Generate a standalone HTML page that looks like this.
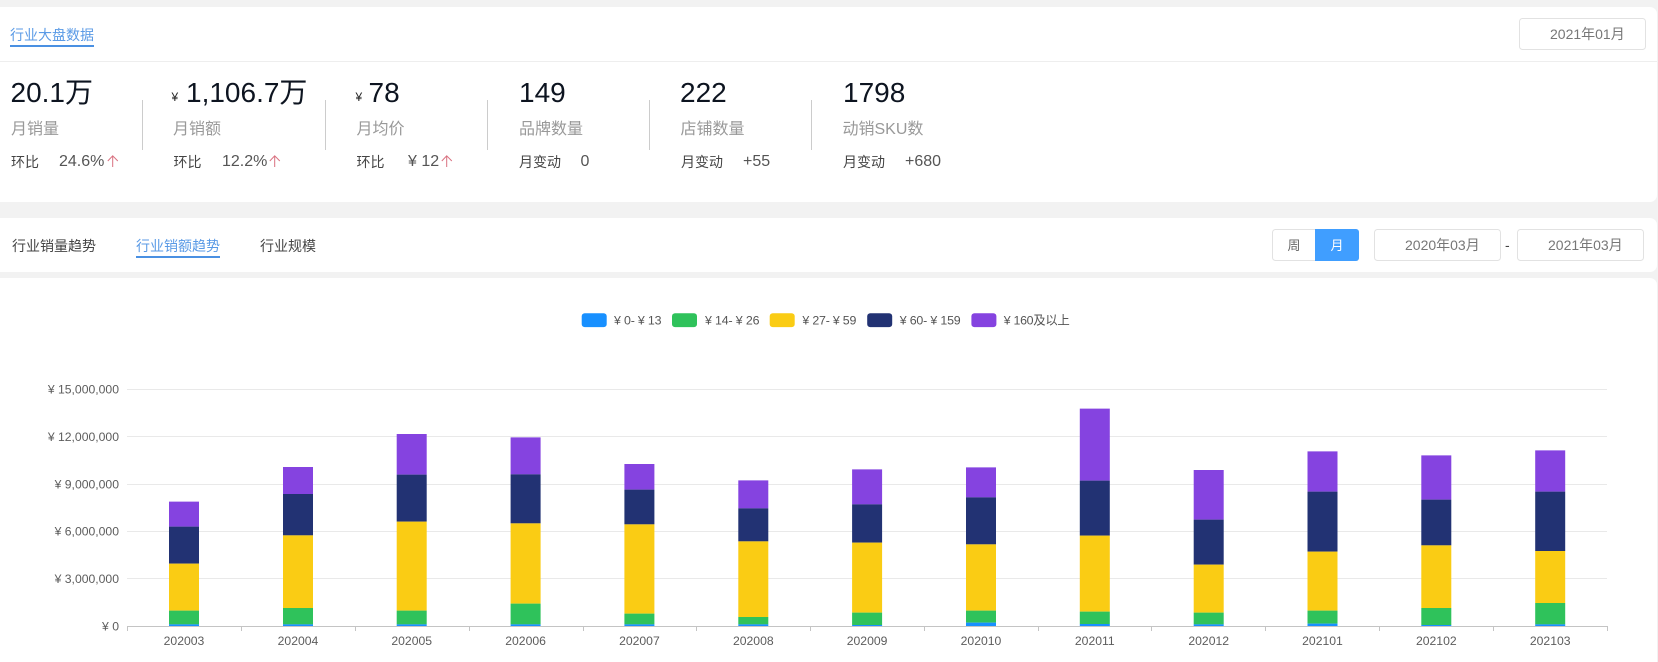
<!DOCTYPE html>
<html lang="zh">
<head>
<meta charset="utf-8">
<title>行业大盘数据</title>
<style>
html,body{margin:0;padding:0;width:1658px;height:662px;overflow:hidden;background:#f2f2f2}
.card{position:absolute;left:0;width:1657px;background:#fff;border-radius:0 7px 7px 0}
svg{position:absolute;left:0;top:0}
text{font-family:"Liberation Sans","Noto Sans CJK SC",sans-serif}
.num{font-size:28px;fill:#0d1420}
.yen{font-size:12px;fill:#222}
.lab{font-size:16px;fill:#999}
.sub{font-size:14px;fill:#444}
.val{font-size:16px;fill:#555}
.inp{font-size:14px;fill:#777}
.ax{font-size:12.2px;fill:#5c5c5c}
.lg{font-size:12.4px;fill:#555}
.arr{fill:none;stroke:#d9707f;stroke-width:1}
.box{fill:#fff;stroke:#e2e2e2;stroke-width:1}
</style>
</head>
<body>
<div class="card" style="top:7px;height:195px"></div>
<div class="card" style="top:218px;height:54px"></div>
<div class="card" style="top:278px;height:384px;border-radius:0 7px 0 0"></div>
<svg width="1658" height="662" viewBox="0 0 1658 662" xmlns="http://www.w3.org/2000/svg">
  <!-- header -->
  <text x="10" y="40" font-size="14" fill="#5a9ae6">行业大盘数据</text>
  <rect x="10" y="45" width="84" height="2" fill="#4a90e2"/>
  <rect x="0" y="61" width="1657" height="1" fill="#eeeeee"/>
  <rect class="box" x="1519.5" y="18.5" width="126" height="31" rx="3"/>
  <text class="inp" x="1550" y="39">2021年01月</text>

  <!-- stats -->
  <g fill="#cccccc">
    <rect x="142" y="100" width="1" height="50"/>
    <rect x="325" y="100" width="1" height="50"/>
    <rect x="487" y="100" width="1" height="50"/>
    <rect x="649" y="100" width="1" height="50"/>
    <rect x="811" y="100" width="1" height="50"/>
  </g>
  <text class="num" x="10.500" y="102">20.1万</text>
  <text class="lab" x="11" y="134">月销量</text>
  <text class="sub" x="11" y="167">环比</text>
  <text class="val" x="59" y="166">24.6%</text>
  <path class="arr" d="M112.7 167V155.8M107.800 161L112.700 155.800L117.800 161"/>

  <text class="yen" x="171.500" y="101">¥</text>
  <text class="num" x="186" y="102">1,106.7万</text>
  <text class="lab" x="173" y="134">月销额</text>
  <text class="sub" x="173.500" y="167">环比</text>
  <text class="val" x="222" y="166">12.2%</text>
  <path class="arr" d="M274.7 167V155.8M269.800 161L274.700 155.800L279.800 161"/>

  <text class="yen" x="355.500" y="101">¥</text>
  <text class="num" x="368.500" y="102">78</text>
  <text class="lab" x="356.500" y="134">月均价</text>
  <text class="sub" x="356.500" y="167">环比</text>
  <text class="val" x="408" y="166">¥ 12</text>
  <path class="arr" d="M446.7 167V155.800M441.800 161L446.700 155.800L451.800 161"/>

  <text class="num" x="519" y="102">149</text>
  <text class="lab" x="519" y="134">品牌数量</text>
  <text class="sub" x="519" y="167">月变动</text>
  <text class="val" x="580.500" y="166">0</text>

  <text class="num" x="680" y="102">222</text>
  <text class="lab" x="680.500" y="134">店铺数量</text>
  <text class="sub" x="681" y="167">月变动</text>
  <text class="val" x="743" y="166">+55</text>

  <text class="num" x="843" y="102">1798</text>
  <text class="lab" x="842.500" y="134">动销SKU数</text>
  <text class="sub" x="843" y="167">月变动</text>
  <text class="val" x="905" y="166">+680</text>

  <!-- tabs -->
  <text x="12" y="251" font-size="14" fill="#444">行业销量趋势</text>
  <text x="136" y="251" font-size="14" fill="#5a9ae6">行业销额趋势</text>
  <rect x="136" y="256" width="84" height="2" fill="#4a90e2"/>
  <text x="260" y="251" font-size="14" fill="#444">行业规模</text>

  <!-- toggle -->
  <rect class="box" x="1272.5" y="229.500" width="86" height="31" rx="3"/>
  <path d="M1315 229H1356a3 3 0 0 1 3 3V258a3 3 0 0 1-3 3H1315Z" fill="#409eff"/>
  <text x="1287.500" y="250" font-size="13" fill="#666">周</text>
  <text x="1330.500" y="250" font-size="13" fill="#fff">月</text>

  <rect class="box" x="1374.500" y="229.500" width="126" height="31" rx="3"/>
  <text class="inp" x="1405" y="250">2020年03月</text>
  <text x="1505" y="250" font-size="14" fill="#444">-</text>
  <rect class="box" x="1517.500" y="229.500" width="126" height="31" rx="3"/>
  <text class="inp" x="1548" y="250">2021年03月</text>

  <!-- legend -->
  <rect x="581.700" y="313.300" width="25" height="13.800" rx="3" fill="#1890ff"/>
  <text class="lg" x="614" y="324.500" textLength="47.500" lengthAdjust="spacing">¥ 0- ¥ 13</text>
  <rect x="672" y="313.300" width="25" height="13.800" rx="3" fill="#2fc25b"/>
  <text class="lg" x="705" y="324.500" textLength="54.500" lengthAdjust="spacing">¥ 14- ¥ 26</text>
  <rect x="769.700" y="313.300" width="25" height="13.800" rx="3" fill="#facc14"/>
  <text class="lg" x="802.400" y="324.500" textLength="54" lengthAdjust="spacing">¥ 27- ¥ 59</text>
  <rect x="867.200" y="313.300" width="25" height="13.800" rx="3" fill="#223273"/>
  <text class="lg" x="899.700" y="324.500" textLength="61" lengthAdjust="spacing">¥ 60- ¥ 159</text>
  <rect x="971.400" y="313.300" width="25" height="13.800" rx="3" fill="#8543e0"/>
  <text class="lg" x="1003.800" y="324.500" textLength="66" lengthAdjust="spacing">¥ 160及以上</text>

  <!-- grid -->
  <g fill="#e9e9e9">
    <rect x="127" y="389" width="1480" height="1"/>
    <rect x="127" y="436" width="1480" height="1"/>
    <rect x="127" y="484" width="1480" height="1"/>
    <rect x="127" y="531" width="1480" height="1"/>
    <rect x="127" y="578" width="1480" height="1"/>
  </g>
  <g class="ax" text-anchor="end">
    <text class="ax" x="119" y="393.500">¥ 15,000,000</text>
    <text class="ax" x="119" y="441">¥ 12,000,000</text>
    <text class="ax" x="119" y="488.500">¥ 9,000,000</text>
    <text class="ax" x="119" y="535.500">¥ 6,000,000</text>
    <text class="ax" x="119" y="583">¥ 3,000,000</text>
    <text class="ax" x="119" y="630.500">¥ 0</text>
  </g>

  <!-- bars -->
  <path fill="#8543e0" d="M169 501.67h30V526.67h-30zM283 467h30V494h-30zM396.700 434h30V474.67h-30zM510.600 437.33h30V474.33h-30zM624.400 464h30V489.67h-30zM738.300 480.33h30V508.33h-30zM852.100 469.33h30V504.33h-30zM966 467.33h30V497.33h-30zM1079.800 408.67h30V480.67h-30zM1193.700 470h30V519.67h-30zM1307.500 451.33h30V491.67h-30zM1421.300 455.33h30V499.67h-30zM1535.200 450.33h30V491.67h-30z"/>
  <path fill="#223273" d="M169 526.67h30V563.67h-30zM283 494h30V535.33h-30zM396.700 474.67h30V521.67h-30zM510.600 474.33h30V523.33h-30zM624.400 489.67h30V524.33h-30zM738.300 508.33h30V541.33h-30zM852.100 504.33h30V542.67h-30zM966 497.33h30V544.33h-30zM1079.800 480.67h30V535.67h-30zM1193.700 519.67h30V564.67h-30zM1307.500 491.67h30V551.67h-30zM1421.300 499.67h30V545.33h-30zM1535.200 491.67h30V551h-30z"/>
  <path fill="#facc14" d="M169 563.67h30V610.67h-30zM283 535.33h30V608h-30zM396.700 521.67h30V610.67h-30zM510.600 523.33h30V603.67h-30zM624.400 524.33h30V613.67h-30zM738.300 541.33h30V617h-30zM852.100 542.67h30V612.67h-30zM966 544.33h30V610.67h-30zM1079.800 535.67h30V611.67h-30zM1193.700 564.67h30V612.67h-30zM1307.500 551.67h30V610.67h-30zM1421.300 545.33h30V608h-30zM1535.200 551h30V603h-30z"/>
  <path fill="#2fc25b" d="M169 610.67h30V624.33h-30zM283 608h30V624.33h-30zM396.700 610.67h30V624.33h-30zM510.600 603.67h30V624.33h-30zM624.400 613.67h30V624.33h-30zM738.300 617h30V624.33h-30zM852.100 612.67h30V625h-30zM966 610.67h30V622.67h-30zM1079.800 611.67h30V624h-30zM1193.700 612.67h30V624.33h-30zM1307.500 610.67h30V623.67h-30zM1421.300 608h30V625h-30zM1535.200 603h30V624.33h-30z"/>
  <path fill="#1890ff" d="M169 624.33h30V626h-30zM283 624.33h30V626h-30zM396.700 624.33h30V626h-30zM510.600 624.33h30V626h-30zM624.400 624.33h30V626h-30zM738.300 624.33h30V626h-30zM852.100 625h30V626h-30zM966 622.67h30V626h-30zM1079.800 624h30V626h-30zM1193.700 624.33h30V626h-30zM1307.500 623.67h30V626h-30zM1421.300 625h30V626h-30zM1535.200 624.33h30V626h-30z"/>

  <!-- x axis -->
  <rect x="127" y="626" width="1481" height="1" fill="#c4c4c4"/>
  <path stroke="#c4c4c4" stroke-width="1" fill="none" d="M127.500 626v5M241.500 626v5M355.500 626v5M469.500 626v5M583.500 626v5M696.500 626v5M810.500 626v5M924.500 626v5M1038.500 626v5M1151.500 626v5M1265.500 626v5M1379.500 626v5M1493.500 626v5M1607.500 626v5"/>
  <g text-anchor="middle">
    <text class="ax" x="184" y="645">202003</text>
    <text class="ax" x="298" y="645">202004</text>
    <text class="ax" x="411.700" y="645">202005</text>
    <text class="ax" x="525.600" y="645">202006</text>
    <text class="ax" x="639.400" y="645">202007</text>
    <text class="ax" x="753.300" y="645">202008</text>
    <text class="ax" x="867.100" y="645">202009</text>
    <text class="ax" x="981" y="645">202010</text>
    <text class="ax" x="1094.800" y="645">202011</text>
    <text class="ax" x="1208.700" y="645">202012</text>
    <text class="ax" x="1322.500" y="645">202101</text>
    <text class="ax" x="1436.300" y="645">202102</text>
    <text class="ax" x="1550.200" y="645">202103</text>
  </g>
</svg>
</body>
</html>
